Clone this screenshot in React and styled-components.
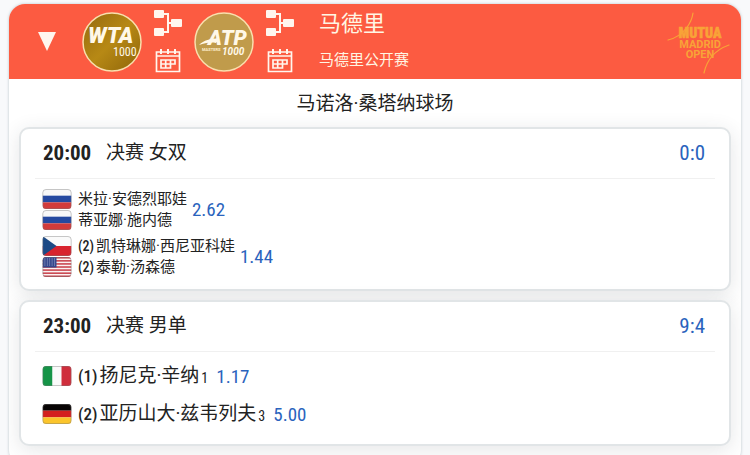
import React, { useState } from 'react';
import styled, { createGlobalStyle } from 'styled-components';

const NARROW = '"Roboto Condensed", "Liberation Sans Narrow", Roboto, sans-serif';

const GlobalStyle = createGlobalStyle`
  * { box-sizing: border-box; }
  body {
    margin: 0;
    background: #f8f9fb;
    color: #222;
    font-family: Roboto, "Noto Sans CJK SC", sans-serif;
  }
`;

const Panel = styled.main`
  margin: 4px 9px 0;
  padding-bottom: 20px;
  border-radius: 16px;
  background: #fff;
  box-shadow: 0 0 3px rgba(90, 120, 130, 0.4);
  overflow: hidden;
`;

const Header = styled.header`
  display: flex;
  align-items: center;
  height: 75px;
  padding: 0 10px 0 24px;
  background: #fc5b41;
  color: #fff6e4;
`;

const IconButton = styled.button`
  display: block;
  padding: 0;
  border: 0;
  background: none;
  color: #fff6ee;
  line-height: 0;
  cursor: pointer;
`;

const ToggleButton = styled(IconButton)`
  width: 28px;
  margin-right: 21px;
  svg {
    transform: ${props => (props.$open ? 'none' : 'rotate(-90deg)')};
  }
`;

const Tour = styled.div`
  display: flex;
  align-items: center;
  gap: 12px;
  margin-right: 12px;
`;

const TourLinks = styled.div`
  display: flex;
  flex-direction: column;
  align-items: center;
  gap: 12px;
  width: 28px;
`;

const Titles = styled.div`
  flex: 1;
  margin-left: 13px;
  padding-bottom: 4px;
`;

const City = styled.h1`
  margin: 0 0 12px;
  font-size: 22px;
  font-weight: 400;
  line-height: 28px;
`;

const EventName = styled.p`
  margin: 0;
  font-size: 15px;
  line-height: 20px;
`;

const Court = styled.h2`
  margin: 0;
  padding-top: 1px;
  font-size: 19px;
  font-weight: 400;
  line-height: 47px;
  text-align: center;
`;

const Matches = styled.div`
  display: flex;
  flex-direction: column;
  gap: 9px;
  padding: 0 10px;
`;

const Card = styled.article`
  padding: 0 14px ${props => (props.$doubles ? 12 : 11)}px;
  border: 2px solid #e1e5e7;
  border-radius: 10px;
  background: #fff;
  box-shadow: 0 4px 20px rgba(40, 50, 60, 0.12);
`;

const CardHead = styled.div`
  display: flex;
  align-items: center;
  height: 50px;
  padding: 0 10px 2px 8px;
  border-bottom: 1px solid #f0f0f0;
`;

const Time = styled.time`
  width: 63px;
  font-family: ${NARROW};
  font-size: 21px;
  font-weight: 700;
`;

const Round = styled.h3`
  flex: 1;
  margin: 0;
  font-size: 19px;
  font-weight: 400;
  line-height: 24px;
`;

const Score = styled.span`
  color: #2a63bd;
  font-family: ${NARROW};
  font-size: 21px;
`;

const Teams = styled.div`
  display: flex;
  flex-direction: column;
  gap: ${props => (props.$doubles ? 5 : 0)}px;
  padding: ${props => (props.$doubles ? 9 : 5)}px 7px 0;
`;

const Team = styled.div`
  display: flex;
  align-items: center;
  gap: ${props => (props.$doubles ? 5 : 8)}px;
`;

const Player = styled.div`
  display: flex;
  align-items: center;
  height: ${props => (props.$doubles ? 21 : 38)}px;
  font-size: ${props => (props.$doubles ? 15 : 19)}px;
  line-height: 20px;
  white-space: nowrap;
  svg {
    margin-right: 6px;
  }
`;

const Seed = styled.span`
  margin-right: 2px;
  font-family: ${NARROW};
  font-size: ${props => (props.$doubles ? 14 : 17)}px;
  font-weight: 500;
`;

const Sets = styled.small`
  margin-left: 2px;
  padding-top: 4px;
  font-family: ${NARROW};
  font-size: 14px;
`;

const Odds = styled.a`
  color: #2a63bd;
  font-family: ${NARROW};
  font-size: 19px;
  text-decoration: none;
`;

const LogoText = styled.text`
  font-family: ${props => (props.$narrow ? NARROW : 'Roboto, sans-serif')};
  font-weight: ${props => props.$weight || 400};
  font-style: ${props => (props.$italic ? 'italic' : 'normal')};
  font-size: ${props => props.$size}px;
`;

const WtaLogo = () => (
  <svg width="60" height="60" viewBox="0 0 60 60" role="img" aria-label="WTA 1000">
    <defs>
      <linearGradient id="gold" x1="0" y1="0" x2="1" y2="1">
        <stop offset="0" stopColor="#94680d" />
        <stop offset="0.5" stopColor="#b78915" />
        <stop offset="1" stopColor="#8d6409" />
      </linearGradient>
    </defs>
    <circle cx="30" cy="30" r="29" fill="url(#gold)" stroke="#f9dfad" strokeWidth="1.5" />
    <LogoText x="6" y="31" $size="22" $weight="900" $italic fill="#fff8e8">WTA</LogoText>
    <LogoText x="31" y="44" $size="12" $narrow fill="#fff8e8">1000</LogoText>
  </svg>
);

const AtpLogo = () => (
  <svg width="60" height="60" viewBox="0 0 60 60" role="img" aria-label="ATP Masters 1000">
    <circle cx="30" cy="30" r="29" fill="#c09b4b" stroke="#f9dfad" strokeWidth="1.5" />
    <path d="M5 33 C10 28 16 27 25 26 L22 31 C16 30 11 31 5 33Z" fill="#fff8e8" />
    <LogoText x="14" y="33" $size="21" $weight="900" $italic fill="#fff8e8">ATP</LogoText>
    <LogoText x="8" y="39" $size="4" $weight="700" fill="#fff0cf">MASTERS</LogoText>
    <LogoText x="28" y="43" $size="10" $weight="700" $italic fill="#fff8e8">1000</LogoText>
  </svg>
);

const OpenLogo = () => (
  <svg width="66" height="66" viewBox="0 0 66 66" role="img" aria-label="Mutua Madrid Open">
    <g fill="none" stroke="#f8a337" strokeWidth="1.2" strokeLinecap="round">
      <path d="M28 4 C27 12 20 27 3 31" />
      <path d="M64 36 C50 41 42 50 39 64" />
    </g>
    <g fill="#f8a337" textAnchor="middle">
      <LogoText x="35" y="29" $size="14" $weight="900" $narrow stroke="#f8a337" strokeWidth="0.5">MUTUA</LogoText>
      <LogoText x="35" y="39" $size="11" $weight="700">MADRID</LogoText>
      <LogoText x="35" y="49" $size="11" $weight="700">OPEN</LogoText>
    </g>
  </svg>
);

const BracketIcon = () => (
  <svg width="28" height="26" viewBox="0 0 28 26" aria-hidden="true">
    <g fill="currentColor">
      <rect x="0" y="0" width="10" height="8" rx="1" />
      <rect x="0" y="18" width="10" height="8" rx="1" />
      <rect x="17" y="9" width="11" height="8" rx="1" />
    </g>
    <path d="M9 4H14V22H9M14 13H19" fill="none" stroke="currentColor" strokeWidth="2" />
  </svg>
);

const CalendarIcon = () => (
  <svg width="26" height="25" viewBox="0 0 26 25" aria-hidden="true">
    <g fill="none" stroke="currentColor">
      <path d="M1.500 4H24.500V23.500H1.500Z" strokeWidth="1.700" />
      <path d="M1.500 8H24.500" strokeWidth="1.400" />
      <path d="M6 1V6M13 1V6M20 1V6" strokeWidth="2" />
      <path d="M6 12H20V16H6ZM6 16V20H15.500V12M10.700 12V20" strokeWidth="1.700" />
    </g>
  </svg>
);

const stripes = {
  ru: ['#f8f8f8', '#2549a0', '#d23b3b'],
  de: ['#080404', '#d3201f', '#fbc52c']
};

const STAR_ROWS = [2, 4, 6, 8];

const FlagArt = ({ code }) => {
  if (code === 'it') {
    return (
      <>
        <rect width="10" height="20" fill="#159447" />
        <rect x="10" width="9" height="20" fill="#fafafa" />
        <rect x="19" width="10" height="20" fill="#cf2e3c" />
      </>
    );
  }
  if (code === 'cz') {
    return (
      <>
        <rect width="29" height="10" fill="#fafafa" />
        <rect y="10" width="29" height="10" fill="#d8232e" />
        <path d="M0 0L14 10L0 20Z" fill="#1c4a86" />
      </>
    );
  }
  if (code === 'us') {
    return (
      <>
        <rect width="29" height="20" fill="#faf2f2" />
        {[0, 1, 2, 3, 4, 5, 6].map(i => (
          <rect key={i} y={i * 3.08} width="29" height="1.540" fill="#c8414b" />
        ))}
        <rect width="14" height="10.500" fill="#35478c" />
        {STAR_ROWS.map(y => (
          <path key={y} d={`M2 ${y}H13`} stroke="#dfe3f3" strokeWidth="0.800" strokeDasharray="0.800 1.600" />
        ))}
      </>
    );
  }
  return stripes[code].map((color, i) => (
    <rect key={color} y={i * 6.67} width="29" height="6.700" fill={color} />
  ));
};

const Flag = ({ code, id }) => (
  <svg width="30" height="20" viewBox="-0.5 0 30 20" role="img" aria-label={code}>
    <clipPath id={id}>
      <rect width="29" height="20" rx="3.500" />
    </clipPath>
    <g clipPath={`url(#${id})`}>
      <FlagArt code={code} />
    </g>
    <rect x="0.300" y="0.500" width="28.400" height="19" rx="3.200" fill="none" stroke="#777" strokeOpacity="0.4" />
  </svg>
);

const matches = [{
  time: '20:00',
  round: '决赛 女双',
  score: '0:0',
  doubles: true,
  teams: [{
    odds: '2.62',
    players: [{ flag: 'ru', name: '米拉·安德烈耶娃' }, { flag: 'ru', name: '蒂亚娜·施内德' }]
  }, {
    odds: '1.44',
    players: [{ flag: 'cz', seed: 2, name: '凯特琳娜·西尼亚科娃' }, { flag: 'us', seed: 2, name: '泰勒·汤森德' }]
  }]
}, {
  time: '23:00',
  round: '决赛 男单',
  score: '9:4',
  doubles: false,
  teams: [{
    odds: '1.17',
    players: [{ flag: 'it', seed: 1, name: '扬尼克·辛纳', sets: 1 }]
  }, {
    odds: '5.00',
    players: [{ flag: 'de', seed: 2, name: '亚历山大·兹韦列夫', sets: 3 }]
  }]
}];

const Match = ({ match }) => {
  const { doubles } = match;
  return (
    <Card $doubles={doubles}>
      <CardHead>
        <Time>{match.time}</Time>
        <Round>{match.round}</Round>
        <Score>{match.score}</Score>
      </CardHead>
      <Teams $doubles={doubles}>
        {match.teams.map((team, t) => (
          <Team key={team.odds} $doubles={doubles}>
            <div>
              {team.players.map((p, i) => (
                <Player key={p.name} $doubles={doubles}>
                  <Flag code={p.flag} id={`flag-${p.flag}-${t}-${i}`} />
                  {p.seed && <Seed $doubles={doubles}>({p.seed})</Seed>}
                  {p.name}
                  {p.sets && <Sets>{p.sets}</Sets>}
                </Player>
              ))}
            </div>
            <Odds href="#odds">{team.odds}</Odds>
          </Team>
        ))}
      </Teams>
    </Card>
  );
};

const TourBlock = ({ name, children }) => (
  <Tour>
    {children}
    <TourLinks>
      <IconButton aria-label={`${name} 签表`}><BracketIcon /></IconButton>
      <IconButton aria-label={`${name} 赛程`}><CalendarIcon /></IconButton>
    </TourLinks>
  </Tour>
);

function App() {
  const [open, setOpen] = useState(true);
  return (
    <>
      <GlobalStyle />
      <Panel>
        <Header>
          <ToggleButton $open={open} aria-label="展开" aria-expanded={open} onClick={() => setOpen(!open)}>
            <svg width="28" height="20" viewBox="0 0 28 20">
              <path d="M5 0H23L14 19Z" fill="currentColor" />
            </svg>
          </ToggleButton>
          <TourBlock name="WTA"><WtaLogo /></TourBlock>
          <TourBlock name="ATP"><AtpLogo /></TourBlock>
          <Titles>
            <City>马德里</City>
            <EventName>马德里公开赛</EventName>
          </Titles>
          <OpenLogo />
        </Header>
        {open && (
          <section>
            <Court>马诺洛·桑塔纳球场</Court>
            <Matches>
              {matches.map(m => <Match key={m.time} match={m} />)}
            </Matches>
          </section>
        )}
      </Panel>
    </>
  );
}

export default App;
